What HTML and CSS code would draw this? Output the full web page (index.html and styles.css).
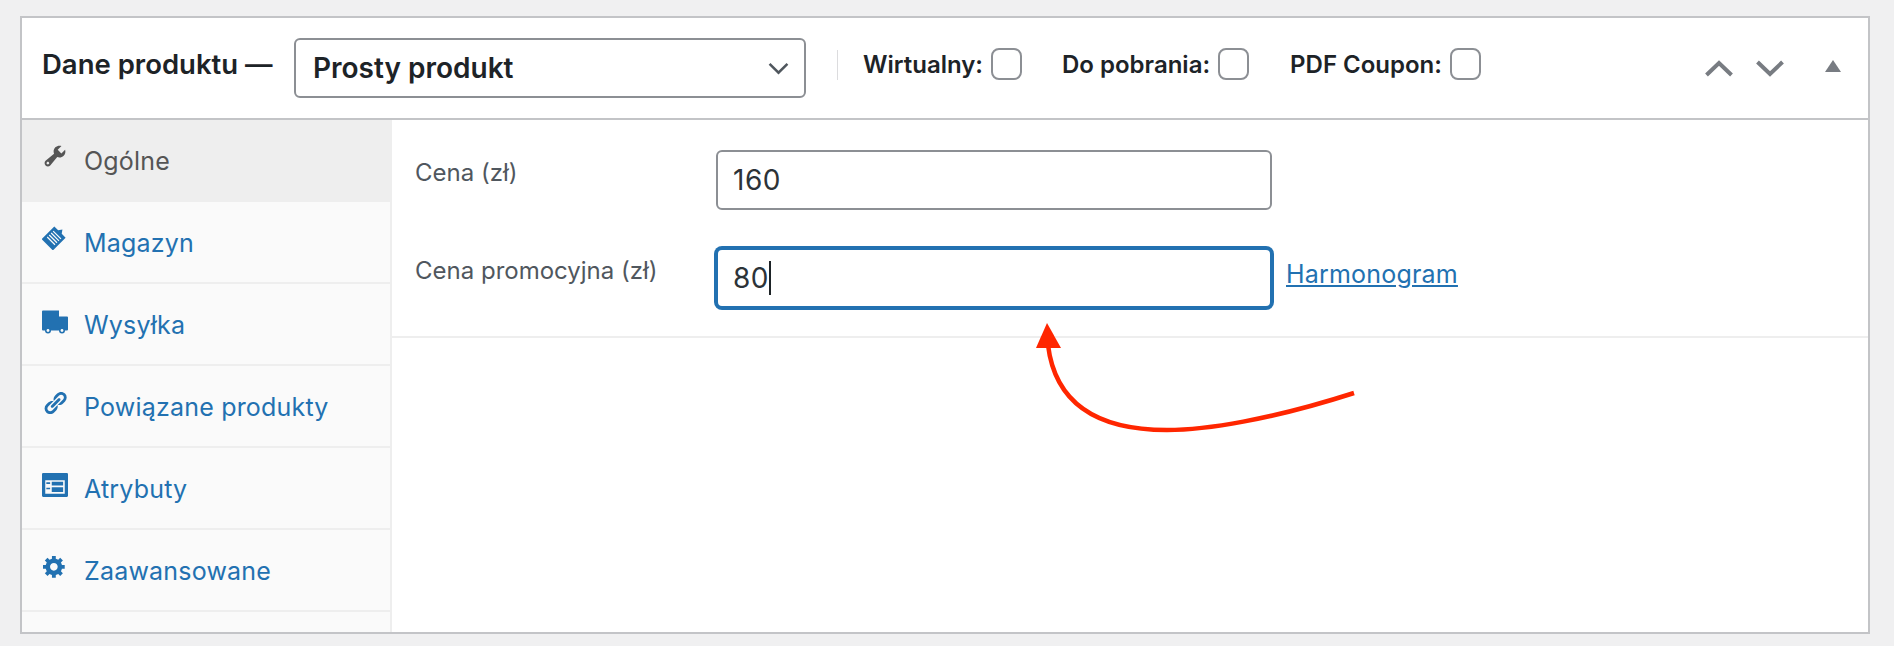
FILE: index.html
```html
<!DOCTYPE html>
<html lang="pl">
<head>
<meta charset="utf-8">
<title>Dane produktu</title>
<link rel="stylesheet" href="styles.css">
</head>
<body>
<div class="stage">
  <section class="box">
    <header class="head">
      <h2 class="title">Dane produktu —</h2>
      <div class="select-wrap">
        <select class="select"><option>Prosty produkt</option></select>
        <svg class="select-arrow" viewBox="0 0 20 12"><path d="M1.500 1.500l8.500 8.500 8.500-8.500" fill="none" stroke="#50575e" stroke-width="2.400"/></svg>
      </div>
      <div class="options">
        <label class="opt opt-1">Wirtualny:<input class="check" type="checkbox"></label>
        <label class="opt opt-2">Do pobrania:<input class="check" type="checkbox"></label>
        <label class="opt">PDF Coupon:<input class="check" type="checkbox"></label>
      </div>
      <div class="handles">
        <svg class="chev" viewBox="0 0 28 17"><path d="M1.500 15L14 3l12.500 12" fill="none" stroke="#787c82" stroke-width="4"/></svg>
        <svg class="chev" viewBox="0 0 28 17"><path d="M1.500 2L14 14 26.500 2" fill="none" stroke="#787c82" stroke-width="4"/></svg>
        <svg class="tri" viewBox="0 0 16 12"><path d="M8 0l8 12H0z" fill="#787c82"/></svg>
      </div>
    </header>
    <div class="body">
      <nav class="tabs">
        <a class="tab active">
          <svg class="ico" viewBox="0 0 20 20"><path d="M16.680 9.770c-1.340 1.340-3.300 1.670-4.950.99l-5.410 6.520c-.99.99-2.590.99-3.580 0s-.99-2.590 0-3.580l6.520-5.410c-.68-1.650-.35-3.610.99-4.950 1.280-1.280 3.120-1.620 4.720-1.060l-2.890 2.890 2.820 2.820 2.860-2.870c.53 1.580.18 3.390-1.080 4.650zM3.810 16.210c.4.39 1.040.39 1.430 0 .4-.4.4-1.040 0-1.430-.39-.4-1.030-.4-1.430 0-.39.39-.39 1.030 0 1.430z"/></svg>
          Ogólne</a>
        <a class="tab">
          <svg class="ico ico-clip" viewBox="0 0 26 26"><g transform="rotate(45 13 13)"><path fill-rule="evenodd" d="M5 6h5.500L13 2.500 15.500 6H21v18H5zM7.500 9.500v1.200h11V9.500zm0 2.800v1.200h11v-1.200zm0 2.800v1.200h11v-1.200zm0 2.800v1.200h11v-1.200z"/></g></svg>
          Magazyn</a>
        <a class="tab">
          <svg class="ico ico-truck" viewBox="0 0 26 23"><path d="M0 1a1 1 0 0 1 1-1h16v6h8a1 1 0 0 1 1 1v12a1 1 0 0 1-1 1H1a1 1 0 0 1-1-1z"/><circle cx="6" cy="20" r="3"/><circle cx="20" cy="20" r="3"/><circle class="hub" cx="6" cy="20" r="1.400"/><circle class="hub" cx="20" cy="20" r="1.400"/></svg>
          Wysyłka</a>
        <a class="tab">
          <svg class="ico ico-link" viewBox="0 0 20 20"><path d="M17.740 2.760c1.680 1.690 1.680 4.410 0 6.100l-1.530 1.520c-1.120 1.120-2.700 1.470-4.140 1.090l2.620-2.610.76-.77.76-.76c.84-.84.84-2.200 0-3.040-.84-.85-2.200-.85-3.040 0l-.77.76-3.380 3.380c-.37-1.440-.02-3.020 1.100-4.140l1.520-1.530c1.690-1.680 4.420-1.680 6.100 0zM8.590 13.430l5.340-5.340c.42-.42.42-1.100 0-1.520-.44-.43-1.130-.39-1.530 0l-5.330 5.340c-.42.42-.42 1.100 0 1.520.44.43 1.130.39 1.520 0zm-.76 2.290l4.140-4.150c.38 1.440.03 3.020-1.090 4.140l-1.520 1.530c-1.690 1.680-4.410 1.680-6.100 0-1.680-1.680-1.680-4.420 0-6.100l1.530-1.520c1.120-1.120 2.700-1.470 4.140-1.100l-4.140 4.150c-.85.84-.85 2.200 0 3.050.84.84 2.200.84 3.040 0z"/></svg>
          Powiązane produkty</a>
        <a class="tab">
          <svg class="ico ico-table" viewBox="0 0 24 22"><path fill-rule="evenodd" d="M1 0h22a1 1 0 0 1 1 1v20a1 1 0 0 1-1 1H1a1 1 0 0 1-1-1V1a1 1 0 0 1 1-1zM3 6.500V19h18V6.500z"/><path d="M4 8.500h3.500V10H4zM4 13.500h3.500V15H4zM9 8h10.500v3.500H9zM9 13h10.500v4.500H9z"/></svg>
          Atrybuty</a>
        <a class="tab">
          <svg class="ico ico-gear" viewBox="1 2 18 18"><path d="M18 12h-2.180c-.17.7-.44 1.350-.81 1.930l1.540 1.540-2.100 2.100-1.540-1.540c-.58.36-1.230.63-1.910.79V19H8v-2.180c-.68-.16-1.330-.43-1.910-.79l-1.540 1.540-2.120-2.120 1.540-1.540c-.36-.58-.63-1.230-.79-1.910H1V9.030h2.170c.16-.7.44-1.350.8-1.940L2.430 5.550l2.100-2.100 1.540 1.540c.58-.37 1.240-.64 1.930-.81V2h3v2.180c.68.16 1.330.43 1.910.79l1.540-1.540 2.120 2.120-1.540 1.540c.36.59.64 1.240.8 1.940H18V12zm-8.500 1.500c1.660 0 3-1.340 3-3s-1.340-3-3-3-3 1.340-3 3 1.340 3 3 3z"/></svg>
          Zaawansowane</a>
      </nav>
      <main class="panel">
        <div class="group">
          <div class="field">
            <label class="label">Cena (zł)</label>
            <input class="input" type="text" value="160">
          </div>
          <div class="field">
            <label class="label">Cena promocyjna (zł)</label>
            <div class="input focused">80<span class="caret"></span></div>
            <a class="sched">Harmonogram</a>
          </div>
        </div>
      </main>
    </div>
  </section>
  <svg class="arrow" viewBox="0 0 1894 646">
    <path d="M1354 393C1270 420 1205 430 1167 430C1095 430 1055 402 1048 345" fill="none" stroke="#ff2600" stroke-width="4.500"/>
    <path d="M1047 323L1061 348H1036z" fill="#ff2600"/>
  </svg>
</div>
</body>
</html>
```

FILE: styles.css
```css
* { box-sizing: border-box; }
html, body { margin: 0; height: 100%; }
body { background: #f0f0f1; font-family: Inter, "Liberation Sans", sans-serif; overflow: hidden; }
.stage { position: relative; width: 1894px; height: 646px; padding: 16px 24px 12px 20px; }
.box { display: flex; flex-direction: column; height: 618px; background: #fff; border: 2px solid #c3c4c7; }
.head { display: flex; align-items: flex-start; height: 102px; border-bottom: 2px solid #c3c4c7; padding-left: 20px; color: #1d2327; }
.title { margin: 29px 0 0; width: 252px; font-size: 27.500px; line-height: 34px; font-weight: 600; white-space: nowrap; }
.select-wrap { position: relative; width: 512px; height: 60px; margin-top: 20px; }
.select { appearance: none; width: 100%; height: 100%; padding: 0 40px 0 17px; border: 2px solid #8c8f94; border-radius: 6px; background: #fff; color: #1d2327; font: 600 28px Inter, sans-serif; }
.select-arrow { position: absolute; right: 17px; top: 24px; width: 21px; height: 13px; }
.options { display: flex; align-items: center; height: 32px; margin: 30px 0 0 31px; padding-left: 26px; position: relative; }
.options::before { content: ""; position: absolute; left: 0; top: 2px; height: 30px; width: 1px; background: #dcdcde; }
.opt { display: flex; align-items: center; gap: 8px; font-size: 24px; font-weight: 600; white-space: nowrap; }
.opt-1 { margin-right: 40px; }
.opt-2 { margin-right: 41px; }
.check { appearance: none; margin: 0; width: 31px; height: 32px; border: 2px solid #8c8f94; border-radius: 8px; background: #fff; }
.handles { display: flex; align-items: flex-start; margin: 42px 0 0 auto; padding-right: 27px; }
.chev { width: 28px; height: 17px; margin-right: 23px; }
.chev + .chev { margin-right: 41px; }
.tri { width: 16px; height: 12px; }
.body { display: flex; flex: 1; min-height: 0; }
.tabs { display: flex; flex-direction: column; width: 370px; background: #fafafa; border-right: 2px solid #eee; }
.tab { display: flex; align-items: center; height: 82px; padding: 2px 0 0 62px; border-bottom: 2px solid #eee; color: #2271b1; font-size: 25px; letter-spacing: .2px; position: relative; }
.tab.active { background: #eee; color: #555; margin-right: -2px; }
.ico { position: absolute; left: 20px; top: 23px; width: 26px; height: 26px; fill: currentColor; }
.hub { fill: #fafafa; }
.ico-clip { top: 22px; }
.ico-truck { top: 25px; }
.ico-link { top: 24px; }
.ico-table { top: 24px; }
.ico-gear { left: 21px; top: 26px; width: 23px; height: 23px; }
.panel { flex: 1; }
.group { height: 218px; border-bottom: 2px solid #eee; padding: 30px 0 0 24px; }
.field { display: flex; align-items: flex-start; height: 98px; }
.label { width: 300px; margin-left: -1px; margin-right: 1px; padding-top: 6px; font-size: 24px; line-height: 34px; color: #50575e; }
.input { width: 556px; height: 60px; padding: 0 15px; border: 2px solid #8c8f94; border-radius: 6px; background: #fff; color: #2c3338; font: 28px/56px Inter, sans-serif; letter-spacing: .5px; outline: 0; }
.focused { display: flex; align-items: center; border-color: #2271b1; box-shadow: 0 0 0 2px #2271b1; }
.caret { display: inline-block; width: 2px; height: 34px; background: #1d2327; }
.sched { margin-left: 14px; font-size: 25px; letter-spacing: .2px; line-height: 52px; color: #2271b1; text-decoration: underline; }
.arrow { position: absolute; inset: 0; width: 1894px; height: 646px; pointer-events: none; }
```
